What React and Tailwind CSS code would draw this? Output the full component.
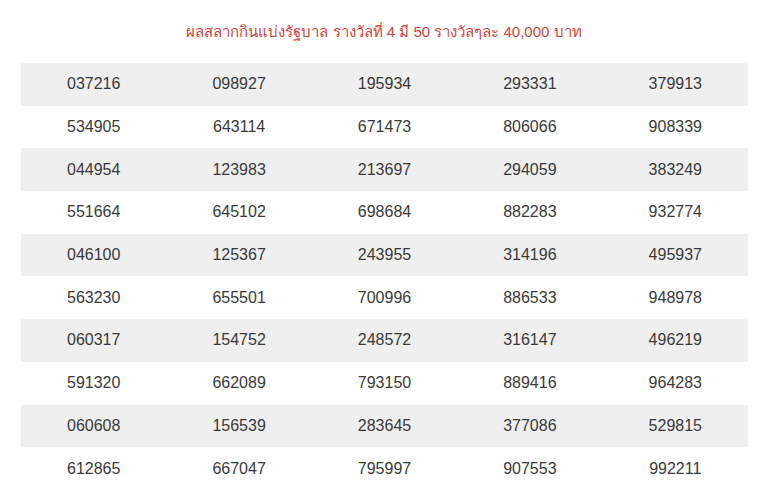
const rows = [
    ['037216', '098927', '195934', '293331', '379913'],
    ['534905', '643114', '671473', '806066', '908339'],
    ['044954', '123983', '213697', '294059', '383249'],
    ['551664', '645102', '698684', '882283', '932774'],
    ['046100', '125367', '243955', '314196', '495937'],
    ['563230', '655501', '700996', '886533', '948978'],
    ['060317', '154752', '248572', '316147', '496219'],
    ['591320', '662089', '793150', '889416', '964283'],
    ['060608', '156539', '283645', '377086', '529815'],
    ['612865', '667047', '795997', '907553', '992211'],
];

export default function App() {
    return (
        <div className="min-h-screen bg-white px-[21px] pt-[22px] font-['Liberation_Sans',sans-serif] text-[#3a3a3a]">
            <h3 className="h-[41px] text-center text-[15px] leading-[20px] text-[#d0453a]">
                ผลสลากกินแบ่งรัฐบาล รางวัลที่ 4 มี 50 รางวัลๆละ 40,000 บาท
            </h3>

            <table className="w-[727px] table-fixed border-collapse">
                <tbody>
                    {rows.map((row, i) => (
                        <tr key={i} className={i % 2 === 0 ? 'bg-[#efefef]' : 'bg-white'}>
                            {row.map((n) => (
                                <td key={n} className="h-[42.7px] p-0 text-center text-[16px] leading-none">
                                    {n}
                                </td>
                            ))}
                        </tr>
                    ))}
                </tbody>
            </table>
        </div>
    );
}
